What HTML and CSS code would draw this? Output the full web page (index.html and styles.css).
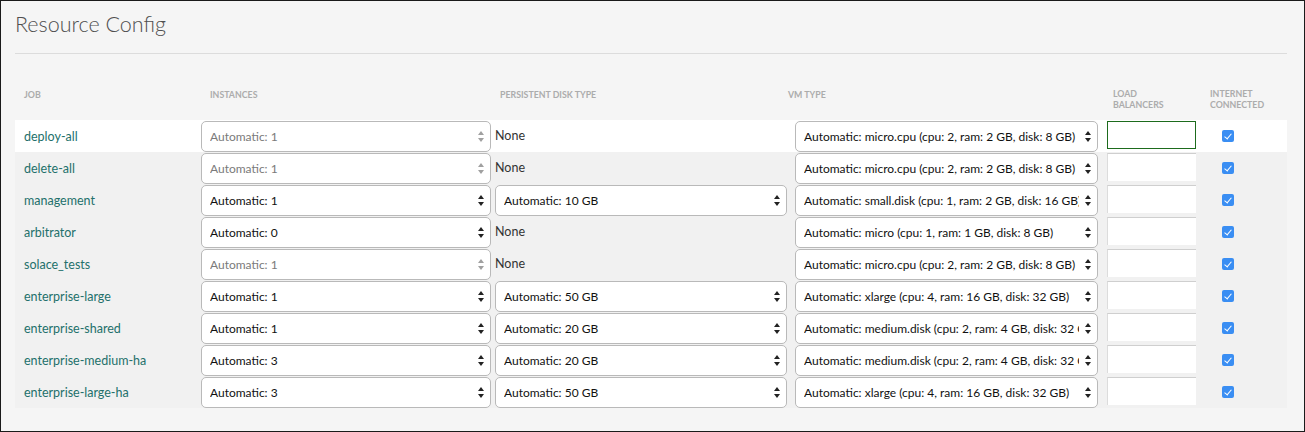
FILE: index.html
```html
<!DOCTYPE html>
<html>
<head>
<meta charset="utf-8">
<link rel="stylesheet" href="styles.css">
</head>
<body>
<div class="frame">
  <h1 class="title">Resource Config</h1>
  <div class="rule"></div>
  <div class="table">
    <div class="th th-job">JOB</div>
    <div class="th th-inst">INSTANCES</div>
    <div class="th th-disk">PERSISTENT DISK TYPE</div>
    <div class="th th-vm">VM TYPE</div>
    <div class="th th-lb">LOAD<br>BALANCERS</div>
    <div class="th th-net">INTERNET<br>CONNECTED</div>

    <div class="row row-active">
      <div class="cell job">deploy-all</div>
      <div class="cell"><div class="sel sel-inst disabled"><span class="val">Automatic: 1</span><span class="arrow"></span></div></div>
      <div class="cell"><span class="none">None</span></div>
      <div class="cell"><div class="sel sel-vm"><span class="val">Automatic: micro.cpu (cpu: 2, ram: 2 GB, disk: 8 GB)</span><span class="arrow"></span></div></div>
      <div class="cell"><div class="lb focused"></div></div>
      <div class="cell"><span class="check"></span></div>
    </div>

    <div class="row">
      <div class="cell job">delete-all</div>
      <div class="cell"><div class="sel sel-inst disabled"><span class="val">Automatic: 1</span><span class="arrow"></span></div></div>
      <div class="cell"><span class="none">None</span></div>
      <div class="cell"><div class="sel sel-vm"><span class="val">Automatic: micro.cpu (cpu: 2, ram: 2 GB, disk: 8 GB)</span><span class="arrow"></span></div></div>
      <div class="cell"><div class="lb"></div></div>
      <div class="cell"><span class="check"></span></div>
    </div>

    <div class="row">
      <div class="cell job">management</div>
      <div class="cell"><div class="sel sel-inst"><span class="val">Automatic: 1</span><span class="arrow"></span></div></div>
      <div class="cell"><div class="sel sel-disk"><span class="val">Automatic: 10 GB</span><span class="arrow"></span></div></div>
      <div class="cell"><div class="sel sel-vm"><span class="val">Automatic: small.disk (cpu: 1, ram: 2 GB, disk: 16 GB)</span><span class="arrow"></span></div></div>
      <div class="cell"><div class="lb"></div></div>
      <div class="cell"><span class="check"></span></div>
    </div>

    <div class="row">
      <div class="cell job">arbitrator</div>
      <div class="cell"><div class="sel sel-inst"><span class="val">Automatic: 0</span><span class="arrow"></span></div></div>
      <div class="cell"><span class="none">None</span></div>
      <div class="cell"><div class="sel sel-vm"><span class="val">Automatic: micro (cpu: 1, ram: 1 GB, disk: 8 GB)</span><span class="arrow"></span></div></div>
      <div class="cell"><div class="lb"></div></div>
      <div class="cell"><span class="check"></span></div>
    </div>

    <div class="row">
      <div class="cell job">solace_tests</div>
      <div class="cell"><div class="sel sel-inst disabled"><span class="val">Automatic: 1</span><span class="arrow"></span></div></div>
      <div class="cell"><span class="none">None</span></div>
      <div class="cell"><div class="sel sel-vm"><span class="val">Automatic: micro.cpu (cpu: 2, ram: 2 GB, disk: 8 GB)</span><span class="arrow"></span></div></div>
      <div class="cell"><div class="lb"></div></div>
      <div class="cell"><span class="check"></span></div>
    </div>

    <div class="row">
      <div class="cell job">enterprise-large</div>
      <div class="cell"><div class="sel sel-inst"><span class="val">Automatic: 1</span><span class="arrow"></span></div></div>
      <div class="cell"><div class="sel sel-disk"><span class="val">Automatic: 50 GB</span><span class="arrow"></span></div></div>
      <div class="cell"><div class="sel sel-vm"><span class="val">Automatic: xlarge (cpu: 4, ram: 16 GB, disk: 32 GB)</span><span class="arrow"></span></div></div>
      <div class="cell"><div class="lb"></div></div>
      <div class="cell"><span class="check"></span></div>
    </div>

    <div class="row">
      <div class="cell job">enterprise-shared</div>
      <div class="cell"><div class="sel sel-inst"><span class="val">Automatic: 1</span><span class="arrow"></span></div></div>
      <div class="cell"><div class="sel sel-disk"><span class="val">Automatic: 20 GB</span><span class="arrow"></span></div></div>
      <div class="cell"><div class="sel sel-vm"><span class="val">Automatic: medium.disk (cpu: 2, ram: 4 GB, disk: 32 GB)</span><span class="arrow"></span></div></div>
      <div class="cell"><div class="lb"></div></div>
      <div class="cell"><span class="check"></span></div>
    </div>

    <div class="row">
      <div class="cell job">enterprise-medium-ha</div>
      <div class="cell"><div class="sel sel-inst"><span class="val">Automatic: 3</span><span class="arrow"></span></div></div>
      <div class="cell"><div class="sel sel-disk"><span class="val">Automatic: 20 GB</span><span class="arrow"></span></div></div>
      <div class="cell"><div class="sel sel-vm"><span class="val">Automatic: medium.disk (cpu: 2, ram: 4 GB, disk: 32 GB)</span><span class="arrow"></span></div></div>
      <div class="cell"><div class="lb"></div></div>
      <div class="cell"><span class="check"></span></div>
    </div>

    <div class="row">
      <div class="cell job">enterprise-large-ha</div>
      <div class="cell"><div class="sel sel-inst"><span class="val">Automatic: 3</span><span class="arrow"></span></div></div>
      <div class="cell"><div class="sel sel-disk"><span class="val">Automatic: 50 GB</span><span class="arrow"></span></div></div>
      <div class="cell"><div class="sel sel-vm"><span class="val">Automatic: xlarge (cpu: 4, ram: 16 GB, disk: 32 GB)</span><span class="arrow"></span></div></div>
      <div class="cell"><div class="lb"></div></div>
      <div class="cell"><span class="check"></span></div>
    </div>
  </div>
</div>
</body>
</html>
```
FILE: styles.css
```css
* { box-sizing: border-box; }
html, body { margin: 0; padding: 0; }
body {
  font-family: Lato, "Open Sans", sans-serif;
  background: #f5f5f5;
}
.frame {
  width: 1305px;
  height: 432px;
  border: 1px solid #1a1a1a;
  background: #f5f5f5;
  padding: 0 17px 0 14px;
  overflow: hidden;
}
.title {
  margin: 0;
  padding-top: 8px;
  height: 38px;
  font-size: 21.5px;
  line-height: 30px;
  font-weight: 300;
  color: #4f4f4f;
}
.rule {
  height: 1px;
  background: #dcdcdc;
  margin-top: 14px;
}
.table {
  display: grid;
  grid-template-columns: 186px 294px 300px 311px 100px 81px;
  margin-top: 33px;
}
.th {
  font-size: 8.8px;
  line-height: 11px;
  font-weight: 700;
  color: #acacac;
  height: 33px;
  padding-top: 2px;
}
.th-job { padding-left: 9px; }
.th-inst { padding-left: 9px; }
.th-disk { padding-left: 5px; }
.th-vm { margin-left: -7px; }
.th-lb { padding-left: 7px; padding-top: 1px; }
.th-net { padding-left: 4px; padding-top: 1px; }

.row {
  display: contents;
}
.cell {
  height: 32px;
  display: flex;
  align-items: center;
  background: #f1f1f1;
  font-size: 12.5px;
}
.row-active .cell { background: #fff; }
.job {
  padding-left: 9px;
  color: #23706b;
}
.none {
  color: #333;
  margin-top: -1px;
}
.sel {
  height: 31px;
  background: #fff;
  border: 1px solid #b9b9b9;
  border-radius: 5px;
  display: flex;
  align-items: center;
  padding: 0 6px 0 8px;
  color: #111;
  font-size: 12px;
}
.sel .val {
  flex: 1;
  overflow: hidden;
  white-space: nowrap;
  margin-right: 6px;
}
.sel .arrow {
  flex: none;
  width: 6px;
  height: 11px;
  display: flex;
  flex-direction: column;
  justify-content: space-between;
}
.sel .arrow::before,
.sel .arrow::after {
  content: "";
  display: block;
  width: 0;
  height: 0;
  border-left: 3px solid transparent;
  border-right: 3px solid transparent;
}
.sel .arrow::before { border-bottom: 4px solid #222; }
.sel .arrow::after { border-top: 4px solid #222; }
.sel.disabled { color: #7a7a7a; }
.sel.disabled .arrow::before { border-bottom-color: #a0a0a0; }
.sel.disabled .arrow::after { border-top-color: #a0a0a0; }

.sel-inst { width: 290px; }
.sel-disk { width: 292px; }
.sel-vm { width: 303px; }

.lb {
  width: 89px;
  height: 28px;
  margin-left: 1px;
  margin-top: -2px;
  background: #fff;
  border-top: 1px solid #cfcfcf;
  border-left: 1px solid #dcdcdc;
}
.lb.focused {
  border: 1px solid #1d6b1d;
}
.check {
  width: 12px;
  height: 12px;
  margin-left: 16px;
  border-radius: 2px;
  background: #3a8ef3;
  position: relative;
}
.check::after {
  content: "";
  position: absolute;
  left: 4px;
  top: 1.5px;
  width: 3px;
  height: 6px;
  border-right: 1.6px solid #fff;
  border-bottom: 1.6px solid #fff;
  transform: rotate(40deg);
}
```
